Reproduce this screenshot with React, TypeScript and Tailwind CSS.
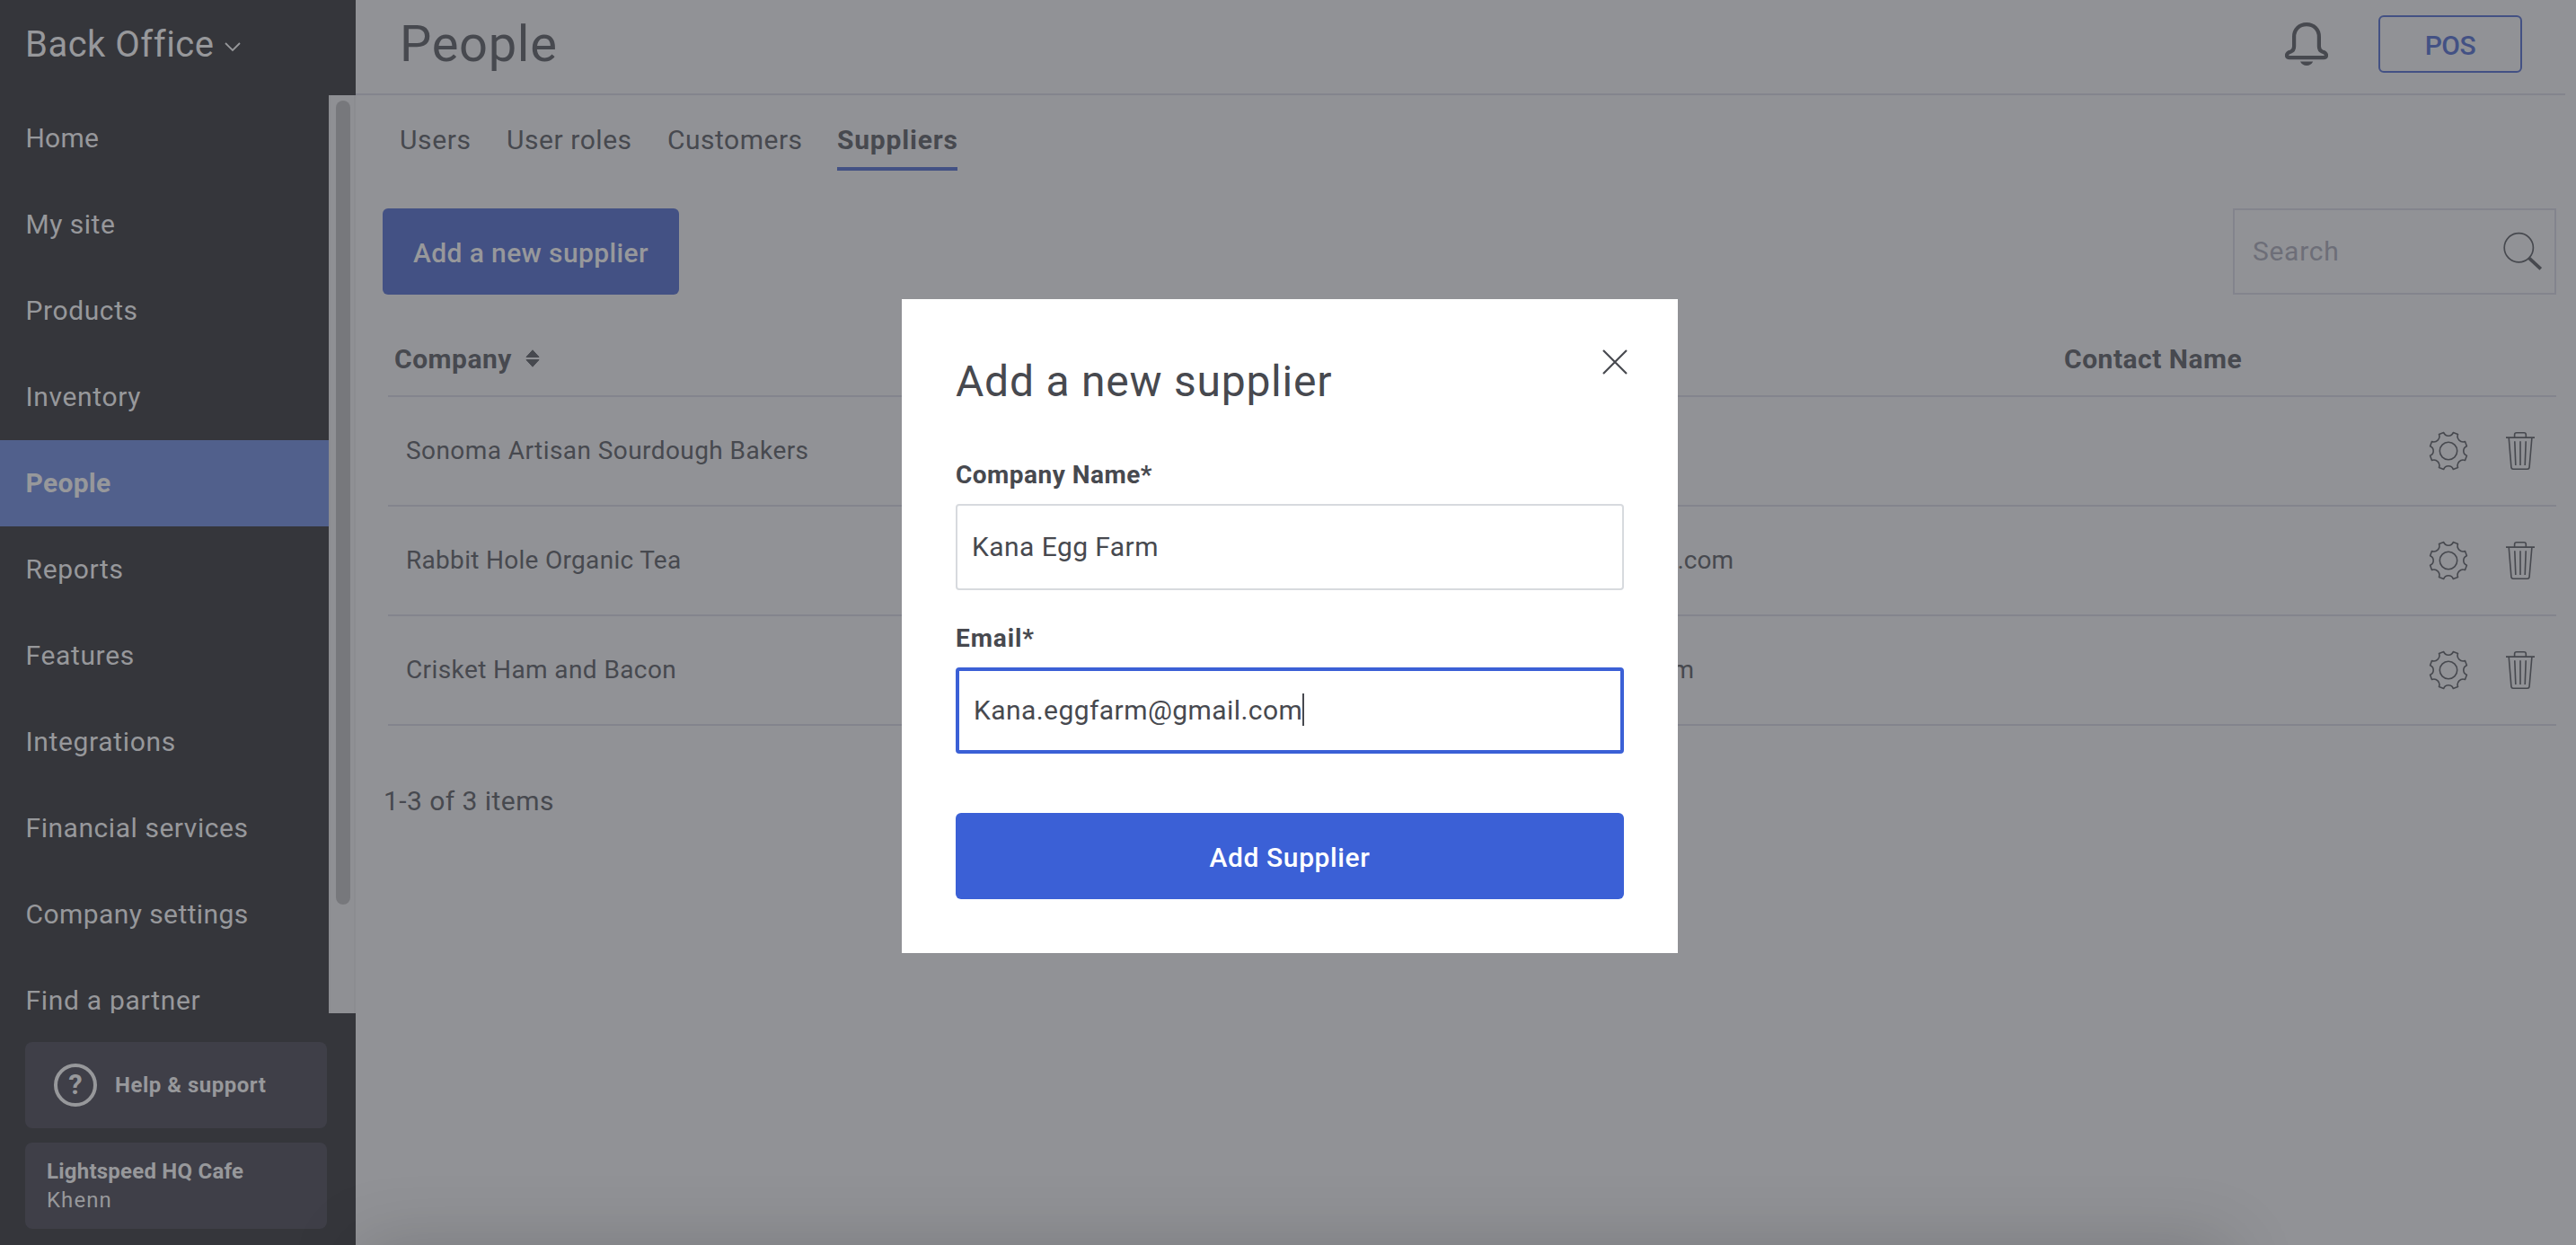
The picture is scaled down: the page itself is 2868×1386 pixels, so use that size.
const navItems = [
  { label: 'Home', spacing: 'tracking-[0.2px]' },
  { label: 'My site', spacing: 'tracking-[0.5px]' },
  { label: 'Products', spacing: 'tracking-[0.6px]' },
  { label: 'Inventory', spacing: 'tracking-[0.65px]' },
  { label: 'People', spacing: 'tracking-[0.3px]', active: true },
  { label: 'Reports', spacing: 'tracking-[0.65px]' },
  { label: 'Features', spacing: 'tracking-[0.65px]' },
  { label: 'Integrations', spacing: 'tracking-[0.65px]' },
  { label: 'Financial services', spacing: 'tracking-[0.55px]' },
  { label: 'Company settings', spacing: 'tracking-[0.42px]' },
  { label: 'Find a partner', spacing: 'tracking-[0.7px]' },
]

const tabs = [
  { label: 'Users', className: 'w-[119px] tracking-[0.65px]' },
  { label: 'User roles', className: 'w-[179px] tracking-[0.55px]' },
  { label: 'Customers', className: 'w-[189px] tracking-[0.5px]' },
  { label: 'Suppliers', className: 'w-[134px] tracking-[0.8px]', active: true },
]

const suppliers = [
  { name: 'Sonoma Artisan Sourdough Bakers', spacing: 'tracking-[0.43px]', email: '', emailWidth: '' },
  { name: 'Rabbit Hole Organic Tea', spacing: 'tracking-[0.3px]', email: '.com', emailWidth: 'w-[926px]' },
  { name: 'Crisket Ham and Bacon', spacing: 'tracking-[0.4px]', email: '.com', emailWidth: 'w-[882px]' },
]

function BellIcon() {
  return (
    <svg width="48" height="48" viewBox="0 0 48 48" fill="none">
      <path
        d="M24 2.1C15.8 2.1 10.1 8 10.1 16v10.500c0 3.200-.6 5-3.600 5.900C3.600 33.200 2 34.500 2 36.600 2 38.400 3.300 39.100 5 39.100h38c1.700 0 3-.7 3-2.500 0-2.100-1.600-3.400-4.500-4.200-3-.9-3.600-2.700-3.600-5.900V16C37.900 8 32.200 2.100 24 2.100Z"
        stroke="#47494f"
        strokeWidth="4.2"
      />
      <path d="M17 43.600h14.200C29.800 46.600 27.300 48 24.100 48S18.400 46.600 17 43.600Z" fill="#47494f" />
    </svg>
  )
}

function SearchIcon() {
  return (
    <svg width="46" height="44" viewBox="0 0 46 44" fill="none" stroke="#47494f">
      <circle cx="18.300" cy="17.700" r="16.100" strokeWidth="1.700" />
      <path d="M29.800 29.300 42.800 41.300" strokeWidth="3.800" />
    </svg>
  )
}

function SortIcon() {
  return (
    <svg width="16" height="20" viewBox="0 0 16 20" fill="#47494f" stroke="#47494f" strokeLinejoin="round">
      <path d="M8 .8 15 8.400H1Z" />
      <path d="M8 19.200 1 11.600h14Z" />
    </svg>
  )
}

function GearIcon() {
  return (
    <svg width="44" height="44" viewBox="-22 -22 44 44" fill="none" stroke="#47494f" strokeWidth="1.600" strokeLinejoin="round">
      <path d="M5.300-20.400 10.500-18.500A6.200 6.200 0 0 0 18.500-10.500L20.400-5.300A5.700 5.700 0 0 0 20.400 5.300L18.500 10.500A6.200 6.200 0 0 0 10.500 18.500L5.300 20.400A5.700 5.700 0 0 0-5.300 20.400L-10.500 18.500A6.200 6.200 0 0 0-18.500 10.500L-20.400 5.300A5.700 5.700 0 0 0-20.400-5.300L-18.500-10.500A6.200 6.200 0 0 0-10.500-18.500L-5.300-20.400A5.700 5.700 0 0 0 5.300-20.400Z" />
      <circle r="9.700" />
    </svg>
  )
}

function TrashIcon() {
  return (
    <svg width="32" height="42" viewBox="0 0 32 42" fill="none" stroke="#47494f" strokeWidth="1.600">
      <path d="M0 6.100h32M9.600 6V3c0-1.500.7-2.200 2.200-2.200h8.300c1.500 0 2.200.7 2.200 2.200v3" />
      <path d="M3.200 6.200 5.900 39c.1 1.500.8 2.200 2.200 2.200h15.800c1.400 0 2.100-.7 2.200-2.200L28.900 6.200" />
      <path d="M9.800 10.200 10.800 37M16 10.200V37M22.200 10.200 21.200 37" />
    </svg>
  )
}

function Sidebar() {
  return (
    <aside className="flex w-[396px] shrink-0 flex-col bg-[#35363b] text-[#97989b]">
      <div className="flex h-[106px] shrink-0 items-center pb-[7px] pl-[28px]">
        <span className="text-[40px] tracking-[0.5px]">Back Office</span>
        <svg className="mt-[5px] ml-[11px]" width="18" height="12" viewBox="0 0 18 12" fill="none" stroke="#97989b" strokeWidth="1.800">
          <path d="M1 2 9 10 17 2" />
        </svg>
      </div>

      <div className="flex h-[1022px] shrink-0">
        <nav className="w-[366px] overflow-hidden">
          {navItems.map((item) => (
            <a
              key={item.label}
              className={`flex h-[96px] items-center pb-[2px] pl-[28.5px] text-[30px] whitespace-nowrap ${item.spacing} ${
                item.active ? 'bg-[#51608c] font-bold' : ''
              }`}
            >
              {item.label}
            </a>
          ))}
        </nav>
        <div className="w-[30px] border-x-2 border-[#8b8c90] bg-[#8f9094] pt-[6px] pl-[6px]">
          <div className="h-[895px] w-[16px] rounded-full bg-[#77787c]" />
        </div>
      </div>

      <div className="flex flex-col gap-4 pt-8 pl-[28px]">
        <div className="flex h-[96px] w-[336px] items-center gap-[20px] rounded-lg bg-[#3f3f48] pl-8">
          <span className="flex size-[48px] items-center justify-center rounded-full border-4 border-[#97989b] text-[31px] font-bold">
            ?
          </span>
          <span className="text-[24px] font-bold tracking-[0.5px]">Help &amp; support</span>
        </div>
        <div className="flex h-[96px] w-[336px] flex-col justify-center rounded-lg bg-[#3f3f48] pl-6 text-[24px] leading-[32px]">
          <span className="font-bold tracking-[0.23px]">Lightspeed HQ Cafe</span>
          <span className="tracking-[1.06px]">Khenn</span>
        </div>
      </div>
    </aside>
  )
}

function SupplierTable() {
  return (
    <div className="mt-8 ml-[6px] text-[28px]">
      <div className="flex h-[82px] items-center border-b-2 border-[#83848d] pb-[2px] text-[30px] font-bold">
        <div className="flex w-[1866px] items-center gap-[15px] pl-[7px]">
          <span className="tracking-[0.5px]">Company</span>
          <SortIcon />
        </div>
        <div className="tracking-[0.5px]">Contact Name</div>
      </div>
      {suppliers.map((supplier) => (
        <div key={supplier.name} className="flex h-[122px] items-center border-b-2 border-[#83848d]">
          <div className={`w-[572px] pl-[20px] whitespace-nowrap ${supplier.spacing}`}>{supplier.name}</div>
          <div className="w-[1294px]">
            <div className={`text-right ${supplier.emailWidth}`}>{supplier.email}</div>
          </div>
          <div className="flex flex-1 items-center justify-end gap-[42px] pr-[24px]">
            <GearIcon />
            <TrashIcon />
          </div>
        </div>
      ))}
    </div>
  )
}

function AddSupplierModal() {
  return (
    <form className="absolute top-[333px] left-[1004px] flex h-[728px] w-[864px] flex-col bg-white px-[60px] pt-[60px]">
      <button type="button" aria-label="Close" className="absolute top-[56px] right-[56px]">
        <svg width="28" height="28" viewBox="0 0 28 28" fill="none" stroke="#47494f" strokeWidth="2.200">
          <path d="M1 1 27 27M27 1 1 27" />
        </svg>
      </button>
      <h2 className="text-[48px] leading-[64px] tracking-[0.76px]">Add a new supplier</h2>

      <label htmlFor="company" className="mt-[56px] text-[28px] leading-[32px] font-bold tracking-[0.48px]">
        Company Name*
      </label>
      <input
        id="company"
        defaultValue="Kana Egg Farm"
        className="mt-4 h-[96px] rounded border-2 border-[#d7dade] px-4 pb-[2px] text-[30px] tracking-[0.44px]"
      />

      <span className="mt-[38px] text-[28px] leading-[32px] font-bold tracking-[0.9px]">Email*</span>
      <div className="mt-4 flex h-[96px] items-center rounded border-4 border-[#3b60d6] px-4 pb-[2px] text-[30px] tracking-[0.43px]">
        Kana.eggfarm@gmail.com
        <span className="h-[36px] w-[2px] bg-[#47494f]" />
      </div>

      <button
        type="button"
        className="mt-[66px] h-[96px] rounded-md bg-[#3b60d6] pt-[3px] text-[30px] font-medium tracking-[0.6px] text-white"
      >
        Add Supplier
      </button>
    </form>
  )
}

export default function App() {
  return (
    <div className="relative flex h-[1386px] w-[2868px] overflow-hidden bg-[#919296] font-['Roboto',sans-serif] text-[#47494f]">
      <Sidebar />

      <main className="flex-1">
        <header className="mr-[12px] flex h-[106px] items-center border-b-2 border-[#83848d] pr-[48px] pb-[6px] pl-[49px]">
          <h1 className="text-[56px] leading-[64px] tracking-[0.7px]">People</h1>
          <div className="ml-auto">
            <BellIcon />
          </div>
          <button className="ml-[56px] h-[64px] w-[160px] rounded-md border-2 border-[#435184] pt-[3px] text-[30px] font-medium tracking-[-0.41px] text-[#435184]">
            POS
          </button>
        </header>

        <div className="flex pt-[20px] pl-[49px] text-[30px] whitespace-nowrap">
          {tabs.map((tab) => (
            <a
              key={tab.label}
              className={`flex h-16 items-center border-b-4 pb-[2px] ${tab.className} ${
                tab.active ? 'border-[#435184] font-bold' : 'border-transparent'
              }`}
            >
              {tab.label}
            </a>
          ))}
        </div>

        <div className="pt-[42px] pr-[22px] pl-[30px]">
          <div className="flex justify-between">
            <button className="h-[96px] w-[330px] rounded-md bg-[#435184] pt-[3px] text-[30px] font-medium tracking-[0.38px] text-[#97989b]">
              Add a new supplier
            </button>
            <div className="flex h-[96px] w-[360px] items-center justify-between border-2 border-[#83848d] pr-[12px] pl-[20px] text-[30px] tracking-[0.7px] text-[#6d6e78]">
              <span className="pb-[2px]">Search</span>
              <SearchIcon />
            </div>
          </div>

          <SupplierTable />

          <p className="mt-[62px] pl-px text-[30px] leading-[44px] tracking-[0.45px]">1-3 of 3 items</p>
        </div>
      </main>

      <AddSupplierModal />

      {/* soft shadow rising from the bottom edge */}
      <div className="pointer-events-none absolute top-full left-[400px] h-[200px] w-[2080px] shadow-[0_0_80px_rgba(0,0,0,0.17)]" />
    </div>
  )
}
